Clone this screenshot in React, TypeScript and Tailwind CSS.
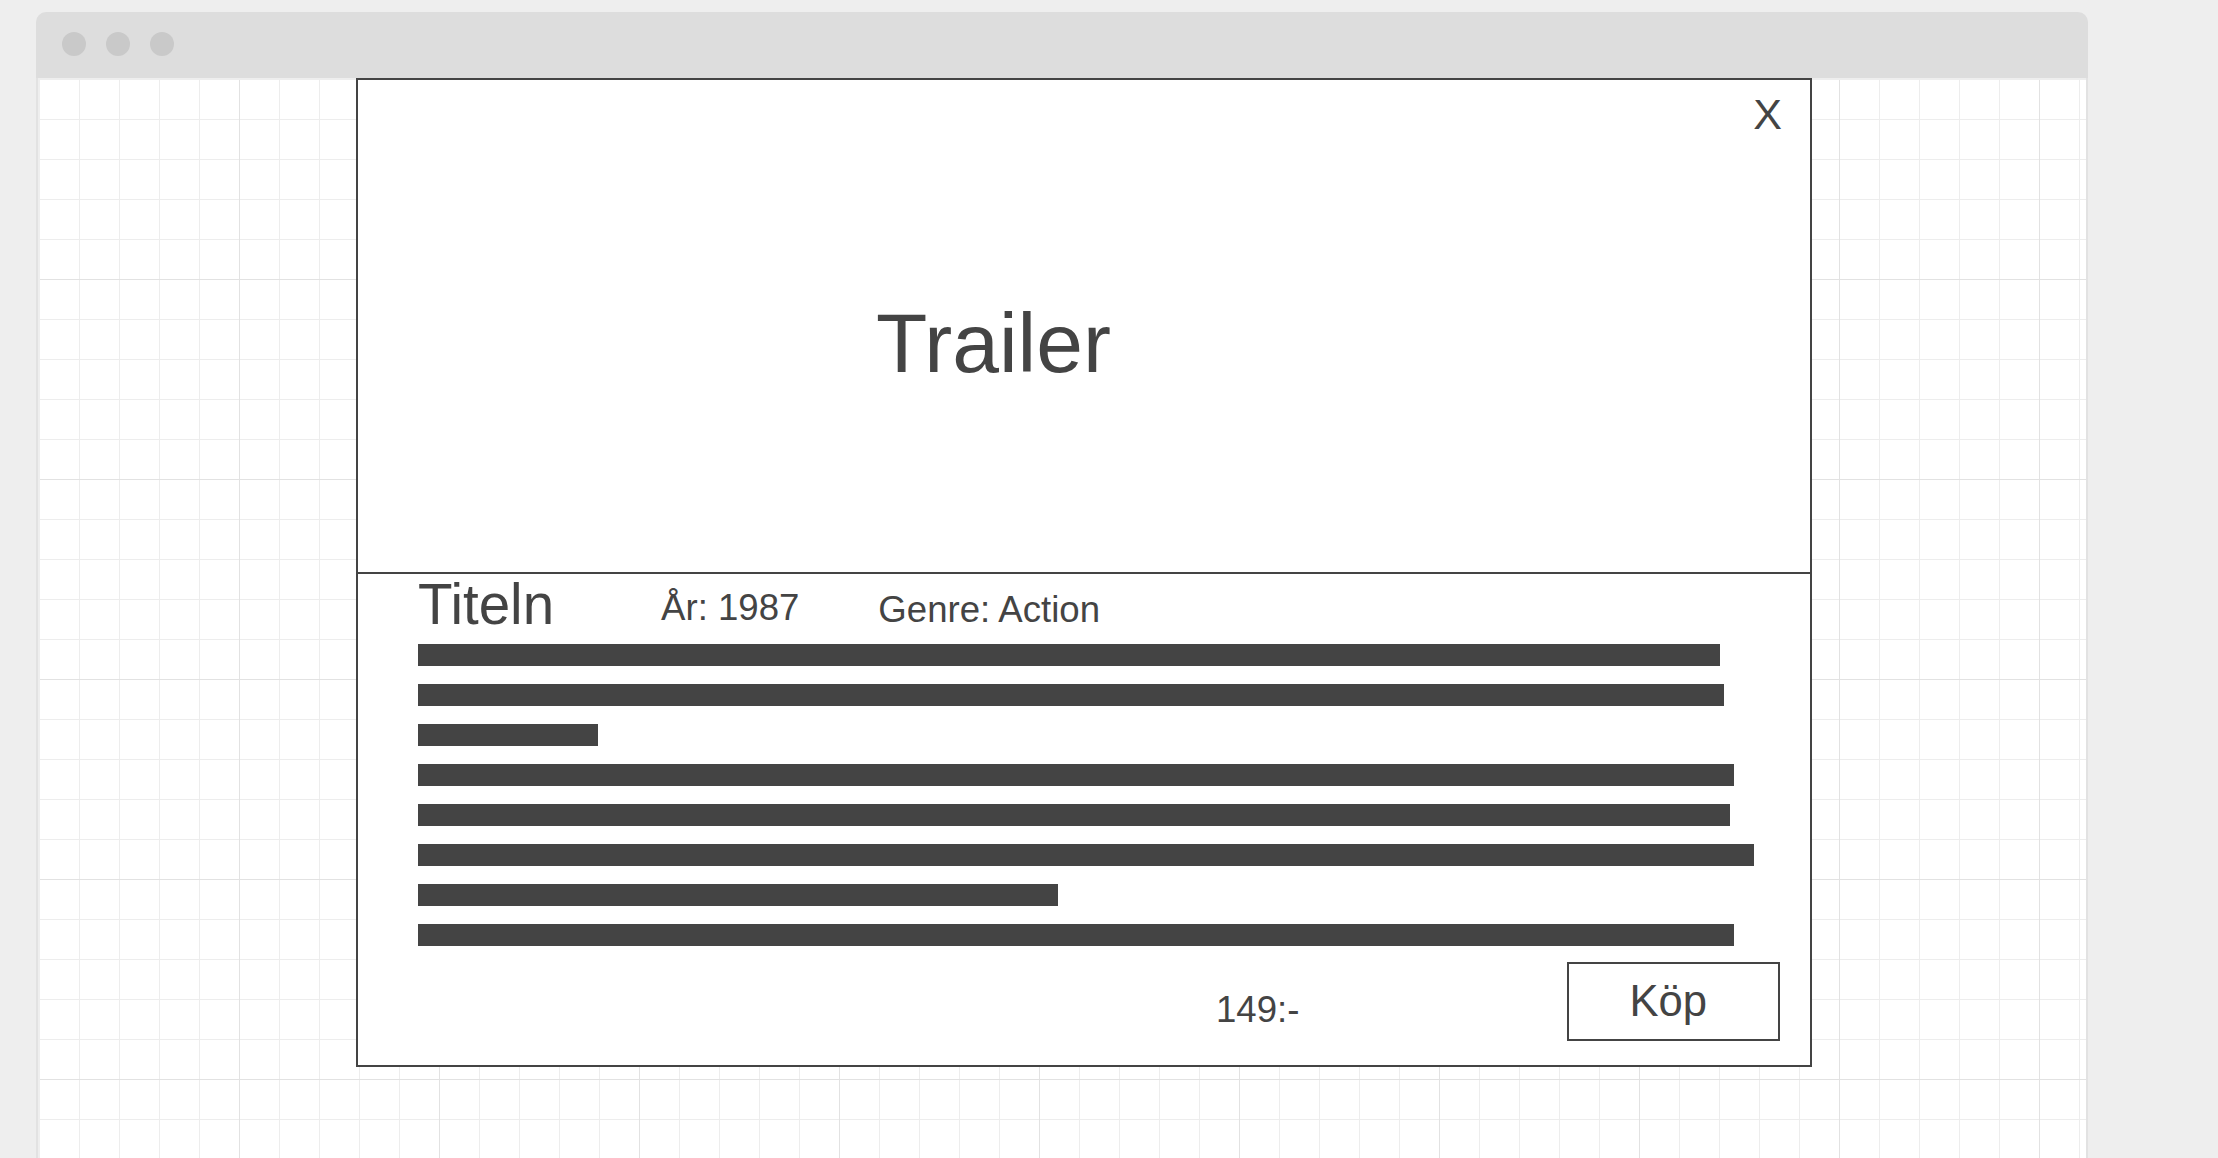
import React from "react";

const bars = [1302, 1306, 180, 1316, 1312, 1336, 640, 1316];

export default function App() {
  return (
    <div
      className="h-[1158px] w-[2218px] overflow-hidden bg-[#eeeeee] pl-[36px] pt-[12px] text-[#444444]"
      style={{ fontFamily: '"Liberation Sans", Arial, sans-serif' }}
    >
      <div className="w-[2052px]">
        {/* title bar */}
        <div className="flex h-[66px] items-start gap-[20px] rounded-t-[10px] bg-[#dddddd] pl-[26px] pt-[20px]">
          <div className="h-6 w-6 rounded-full bg-[#c9c9c9]" />
          <div className="h-6 w-6 rounded-full bg-[#c9c9c9]" />
          <div className="h-6 w-6 rounded-full bg-[#c9c9c9]" />
        </div>
        {/* content with grid */}
        <div className="h-[1100px] border-x-2 border-[#e2e2e2] bg-white bg-[linear-gradient(to_right,#e2e2e2_1px,transparent_1px),linear-gradient(to_bottom,#e2e2e2_1px,transparent_1px),linear-gradient(to_right,#ededed_1px,transparent_1px),linear-gradient(to_bottom,#ededed_1px,transparent_1px)] bg-[size:200px_200px,200px_200px,40px_40px,40px_40px] bg-[position:1px_1px] bg-clip-content pl-[2px] pt-[2px]">
          {/* modal */}
          <div className="relative -mt-[2px] ml-[316px] flex h-[989px] w-[1456px] flex-col border-2 border-[#444444] bg-white">
            <div className="absolute right-[28px] top-[13px] text-[43px] leading-none">X</div>
            <div className="h-[494px] shrink-0 border-b-2 border-[#444444] pl-[518px] pt-[221px]">
              <div className="text-[84px] leading-none">Trailer</div>
            </div>
            <div className="flex flex-col pl-[60px]">
              <div className="flex h-[70px] items-start">
                <div className="pt-[3px] text-[56.5px] leading-none">Titeln</div>
                <div className="ml-[107px] pt-[16px] text-[36.6px] leading-none">År: 1987</div>
                <div className="ml-[79px] pt-[18px] text-[36.6px] leading-none">Genre: Action</div>
              </div>
              <div className="flex flex-col gap-[18px]">
                {bars.map((w, i) => (
                  <div key={i} className="h-[22px] bg-[#444444]" style={{ width: w }} />
                ))}
              </div>
              <div className="mt-[16px] flex items-start">
                <div className="ml-[798px] pt-[30px] text-[36.6px] leading-none">149:-</div>
                <div className="ml-[268px] h-[79px] w-[213px] border-2 border-[#444444] pl-[60px] pt-[16px] text-[43.6px] leading-none">
                  Köp
                </div>
              </div>
            </div>
          </div>
        </div>
      </div>
    </div>
  );
}
